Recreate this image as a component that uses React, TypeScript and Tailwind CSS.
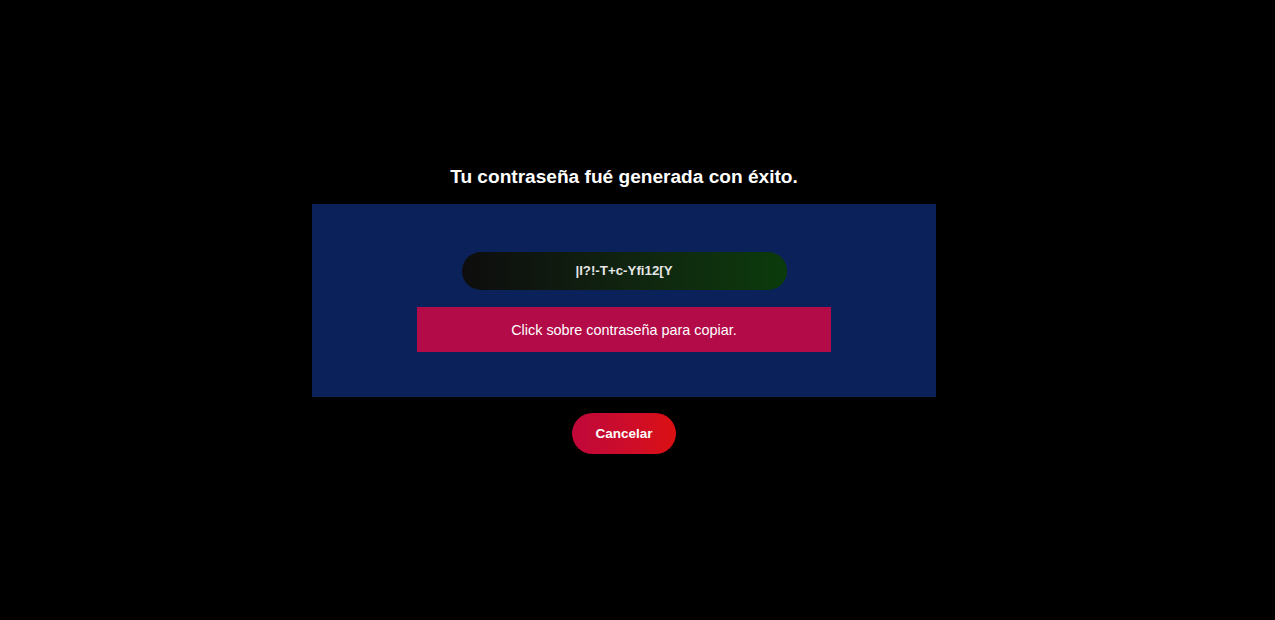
export default function App() {
  return (
    <div
      className="h-[620px] w-full bg-black pt-[165px] text-white"
      style={{ fontFamily: '"Liberation Sans", Arial, sans-serif' }}
    >
      <div className="flex w-[1248px] flex-col items-center">
        <h2 className="text-[19.1px] font-bold leading-[24px]">
          Tu contraseña fué generada con éxito.
        </h2>

        <div className="mt-[15px] flex h-[193px] w-[624px] flex-col items-center bg-[#0a2259] pt-[48px]">
          <button className="flex h-[38px] w-[325px] items-center justify-center rounded-full bg-gradient-to-r from-[#0d0d0d] to-[#0a3b0b] text-[13.3px] font-bold text-[#e6e6e6]">
            |I?!-T+c-Yfi12[Y
          </button>

          <div className="mt-[17px] flex h-[45px] w-[414px] items-center justify-center bg-[#b30a48] pt-[2px] text-[14.4px]">
            Click sobre contraseña para copiar.
          </div>
        </div>

        <button className="mt-[16px] h-[41px] w-[104px] rounded-full bg-gradient-to-r from-[#bf0739] to-[#da1010] pt-[2px] text-[13.5px] font-bold">
          Cancelar
        </button>
      </div>
    </div>
  );
}
